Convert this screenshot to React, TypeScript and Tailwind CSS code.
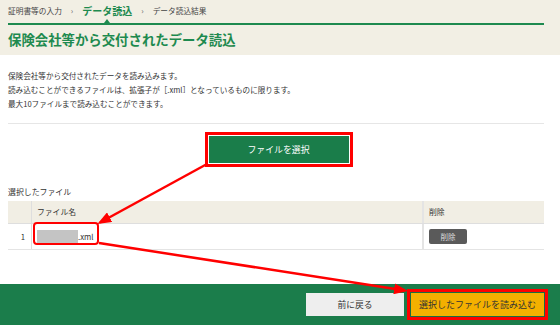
export default function App() {
  return (
    <div className="relative w-[560px] h-[325px] overflow-hidden bg-white text-[#333] font-['Noto_Sans_CJK_JP','Noto_Sans',sans-serif]">
      {/* Header */}
      <div className="bg-[#f2efe4] h-[55px] pl-2 pr-4">
        <div className="relative h-[25px] border-b-2 border-[#1e8a4f] flex items-center pb-[2px] text-[7.7px] text-[#444]">
          <span>証明書等の入力</span>
          <span className="mx-[9px] text-[#666] text-[8px]">›</span>
          <span className="text-[10px] font-bold text-[#1e8a4f] leading-none">データ読込</span>
          <span className="mx-[9px] text-[#666] text-[8px]">›</span>
          <span>データ読込結果</span>
          <span className="absolute left-[96px] bottom-0 w-0 h-0 border-l-[3px] border-r-[3px] border-b-[4px] border-l-transparent border-r-transparent border-b-[#1e8a4f]" />
        </div>
        <div className="h-[30px] flex items-center text-[13.4px] font-bold text-[#1e8a4f] leading-none">
          保険会社等から交付されたデータ読込
        </div>
      </div>

      {/* Body */}
      <div className="pl-2 pr-4">
        <div className="pt-[14px] text-[7.6px] leading-[14px] text-[#333]">
          <p>保険会社等から交付されたデータを読み込みます。</p>
          <p>読み込むことができるファイルは、拡張子が［.xml］となっているものに限ります。</p>
          <p>最大10ファイルまで読み込むことができます。</p>
        </div>
        <div className="mt-[12px] border-t border-[#e6e6e6]" />
        <div className="mt-[8px] flex justify-center pl-[5px]">
          <div className="border-[3px] border-[#ff0000] p-[1px] bg-white">
            <div className="w-[140px] h-[27px] bg-[#1a7d4a] flex items-center justify-center text-white text-[8.9px]">
              ファイルを選択
            </div>
          </div>
        </div>
        <div className="mt-[18px] text-[7.9px] leading-[14px]">選択したファイル</div>
        <div className="mt-[2px] text-[7.8px]">
          <div className="grid grid-cols-[24px_1fr_120px] h-[23px] bg-[#f1eee4] border-b border-[#dedede]">
            <div className="border-r border-[#dedede]" />
            <div className="border-r-2 border-[#e4e4e4] flex items-center pl-[5px]">ファイル名</div>
            <div className="flex items-center pl-[5px]">削除</div>
          </div>
          <div className="grid grid-cols-[24px_1fr_120px] h-[26px] border-b border-[#e4e4e4]">
            <div className="border-r border-[#dedede] flex items-center justify-end pr-[6px]">1</div>
            <div className="border-r-2 border-[#e4e4e4] flex items-center pl-[5px]">
              <span className="w-[41px] h-[13px] bg-[#c4c4c4]" />
              <span>.xml</span>
            </div>
            <div className="flex items-center pl-[5px]">
              <div className="w-[38px] h-[15px] rounded-[2px] bg-[#5a5a5a] text-[#ddd] text-[7.5px] flex items-center justify-center">
                削除
              </div>
            </div>
          </div>
        </div>
      </div>

      {/* Footer */}
      <div className="mt-[34px] h-[42px] bg-[#1b7d4b] border-b border-[#0f5a33] flex items-center justify-end pr-[12px] gap-[3px]">
        <div className="w-[98px] h-[23px] bg-[#eeeeee] flex items-center justify-center text-[8.8px] text-[#333]">
          前に戻る
        </div>
        <div className="border-[3px] border-[#ff0000] p-[1px] bg-[#1b6b42]">
          <div className="w-[133px] h-[23px] bg-[#f4b000] flex items-center justify-center text-[9px] text-[#333]">
            選択したファイルを読み込む
          </div>
        </div>
      </div>

      {/* Annotation overlays */}
      <div className="absolute left-[33px] top-[222px] w-[66px] h-[23px] border-[2px] border-[#ff0000] rounded-[4px]" />
      <svg className="absolute left-0 top-0 pointer-events-none" width="560" height="325" viewBox="0 0 560 325">
        <defs>
          <marker id="ah" markerUnits="userSpaceOnUse" markerWidth="14" markerHeight="11" refX="11" refY="5.5" orient="auto">
            <path d="M0,0 L14,5.5 L0,11 z" fill="#ff0000" />
          </marker>
        </defs>
        <line x1="207" y1="164" x2="100" y2="222.5" stroke="#ff0000" strokeWidth="2.5" markerEnd="url(#ah)" />
        <line x1="99" y1="243" x2="405" y2="290.5" stroke="#ff0000" strokeWidth="2.5" markerEnd="url(#ah)" />
      </svg>
    </div>
  );
}
